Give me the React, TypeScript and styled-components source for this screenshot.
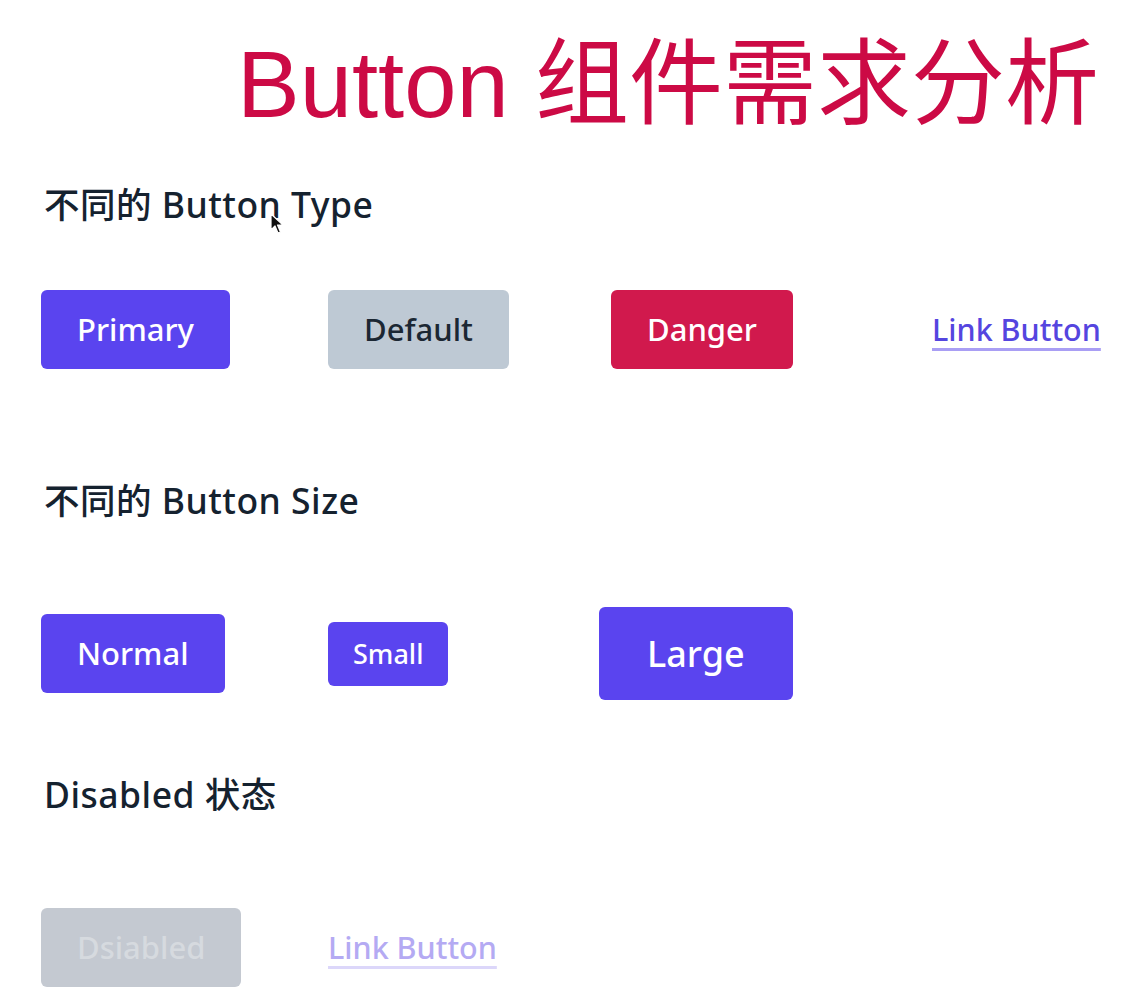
import React from "react";
import styled, { createGlobalStyle, css } from "styled-components";

const GlobalStyle = createGlobalStyle`
  html, body {
    margin: 0;
    padding: 0;
    background: #ffffff;
  }
  body {
    font-family: "Noto Sans", "Noto Sans CJK SC", sans-serif;
    -webkit-font-smoothing: antialiased;
  }
`;

const Page = styled.div`
  position: relative;
  width: 1135px;
  min-height: 993px;
  box-sizing: border-box;
  padding: 38px 0 0 41px;
  display: flex;
  flex-direction: column;
`;

const Title = styled.h1`
  margin: 0 0 0 196px;
  font-family: "Liberation Sans", "Noto Sans CJK SC", sans-serif;
  font-weight: 400;
  font-size: 94px;
  line-height: 94px;
  color: #cc0a45;
  white-space: nowrap;
`;

const Heading = styled.h2<{ $gap: number }>`
  margin: ${(p) => p.$gap}px 0 0 3px;
  font-family: "Noto Sans", "Noto Sans CJK SC", sans-serif;
  font-weight: 500;
  font-size: 35.5px;
  letter-spacing: 0.5px;
  line-height: 40px;
  color: #15222f;
  white-space: nowrap;
`;

const Row = styled.div<{ $gap: number }>`
  margin-top: ${(p) => p.$gap}px;
  display: grid;
  grid-template-columns: 287px 271px 194px 139px auto;
  align-items: center;
`;

type Variant = "primary" | "default" | "danger" | "disabled";
type Size = "normal" | "small" | "large";

const variants: Record<Variant, ReturnType<typeof css>> = {
  primary: css`
    background: #5a44ef;
    color: #ffffff;
  `,
  default: css`
    background: #bec9d4;
    color: #1b2733;
  `,
  danger: css`
    background: #d1194d;
    color: #ffffff;
  `,
  disabled: css`
    background: #c4c9d1;
    color: #d6dadf;
  `,
};

const sizes: Record<Size, ReturnType<typeof css>> = {
  normal: css`
    height: 79px;
    padding: 0 36px;
    font-size: 31px;
  `,
  small: css`
    height: 64px;
    padding: 0 25px;
    font-size: 27px;
  `,
  large: css`
    height: 93px;
    padding: 0 48px;
    font-size: 36px;
  `,
};

const Button = styled.button<{
  $variant: Variant;
  $size?: Size;
  $col?: number;
  $end?: boolean;
}>`
  grid-column: ${(p) => p.$col ?? "auto"};
  justify-self: ${(p) => (p.$end ? "end" : "start")};
  display: inline-flex;
  align-items: center;
  justify-content: center;
  box-sizing: border-box;
  border: none;
  border-radius: 6px;
  font-family: "Noto Sans", sans-serif;
  font-weight: 500;
  line-height: 1;
  white-space: nowrap;
  cursor: pointer;
  ${(p) => sizes[p.$size ?? "normal"]}
  ${(p) => variants[p.$variant]}
`;

const LinkButton = styled.button<{ $col: number; $disabled?: boolean }>`
  grid-column: ${(p) => p.$col};
  justify-self: start;
  display: inline-flex;
  align-items: center;
  height: 79px;
  padding: 0;
  border: none;
  background: transparent;
  font-family: "Noto Sans", sans-serif;
  font-weight: 500;
  font-size: 30.5px;
  line-height: 1;
  white-space: nowrap;
  color: ${(p) => (p.$disabled ? "#b4aaf3" : "#5545df")};
  text-decoration: underline;
  text-decoration-thickness: 3px;
  text-underline-offset: 7px;
  text-decoration-color: ${(p) => (p.$disabled ? "#dcd7fa" : "#a99ef4")};
  cursor: pointer;
`;

const Cursor = styled.svg`
  position: absolute;
  left: 270px;
  top: 213px;
  width: 14px;
  height: 22px;
  pointer-events: none;
`;

export default function App() {
  return (
    <>
      <GlobalStyle />
      <Page>
        <Title>Button 组件需求分析</Title>

        <Heading $gap={52}>不同的 Button Type</Heading>
        <Row $gap={66}>
          <Button $variant="primary">Primary</Button>
          <Button $variant="default">Default</Button>
          <Button $variant="danger" $col={3} $end>
            Danger
          </Button>
          <LinkButton $col={5}>Link Button</LinkButton>
        </Row>

        <Heading $gap={111}>不同的 Button Size</Heading>
        <Row $gap={87}>
          <Button $variant="primary" $size="normal">
            Normal
          </Button>
          <Button $variant="primary" $size="small">
            Small
          </Button>
          <Button $variant="primary" $size="large">
            Large
          </Button>
        </Row>

        <Heading $gap={74}>Disabled 状态</Heading>
        <Row $gap={94}>
          <Button $variant="disabled" disabled>
            Dsiabled
          </Button>
          <LinkButton $col={2} $disabled disabled>
            Link Button
          </LinkButton>
        </Row>

        <Cursor viewBox="0 0 14 22">
          <path
            d="M1 1 L1 17 L5 13 L8 20 L10.5 19 L7.5 12 L13 12 Z"
            fill="#111"
            stroke="#fff"
            strokeWidth="1.2"
            strokeLinejoin="round"
          />
        </Cursor>
      </Page>
    </>
  );
}
